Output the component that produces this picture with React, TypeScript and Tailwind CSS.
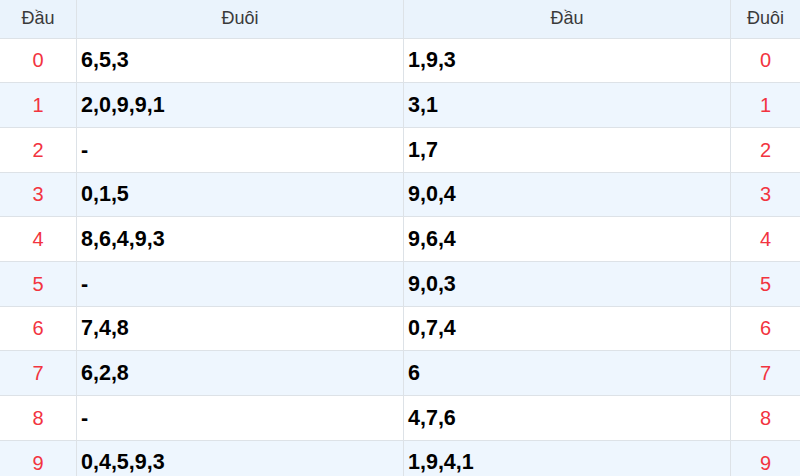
const rows: [string, string, string, string][] = [
  ["0", "6,5,3", "1,9,3", "0"],
  ["1", "2,0,9,9,1", "3,1", "1"],
  ["2", "-", "1,7", "2"],
  ["3", "0,1,5", "9,0,4", "3"],
  ["4", "8,6,4,9,3", "9,6,4", "4"],
  ["5", "-", "9,0,3", "5"],
  ["6", "7,4,8", "0,7,4", "6"],
  ["7", "6,2,8", "6", "7"],
  ["8", "-", "4,7,6", "8"],
  ["9", "0,4,5,9,3", "1,9,4,1", "9"],
];

const App = () => {
  return (
    <div className="w-[800px] h-[476px] overflow-hidden bg-white font-['Liberation_Sans',Arial,sans-serif]">
      <div className="grid grid-cols-[77px_327px_327px_69px] h-[38.5px] bg-[#eaf3fc] border-b border-[#dde2e7] text-[18px] text-[#3a3a3a]">
        <div className="flex items-center justify-center border-r border-[#dde2e7]">Đầu</div>
        <div className="flex items-center justify-center border-r border-[#dde2e7]">Đuôi</div>
        <div className="flex items-center justify-center border-r border-[#dde2e7]">Đầu</div>
        <div className="flex items-center justify-center">Đuôi</div>
      </div>
      {rows.map((r, i) => (
        <div
          key={i}
          className={`grid grid-cols-[77px_327px_327px_69px] h-[44.7px] border-b border-[#dde2e7] ${
            i % 2 === 1 ? "bg-[#eef6fe]" : "bg-white"
          }`}
        >
          <div className="flex items-center justify-center border-r border-[#dde2e7] text-[20px] text-[#f2343f]">
            {r[0]}
          </div>
          <div className="flex items-center pl-1 border-r border-[#dde2e7] text-[21.5px] font-bold text-black">
            {r[1]}
          </div>
          <div className="flex items-center pl-1 border-r border-[#dde2e7] text-[21.5px] font-bold text-black">
            {r[2]}
          </div>
          <div className="flex items-center justify-center text-[20px] text-[#f2343f]">
            {r[3]}
          </div>
        </div>
      ))}
    </div>
  );
};
export default App;
